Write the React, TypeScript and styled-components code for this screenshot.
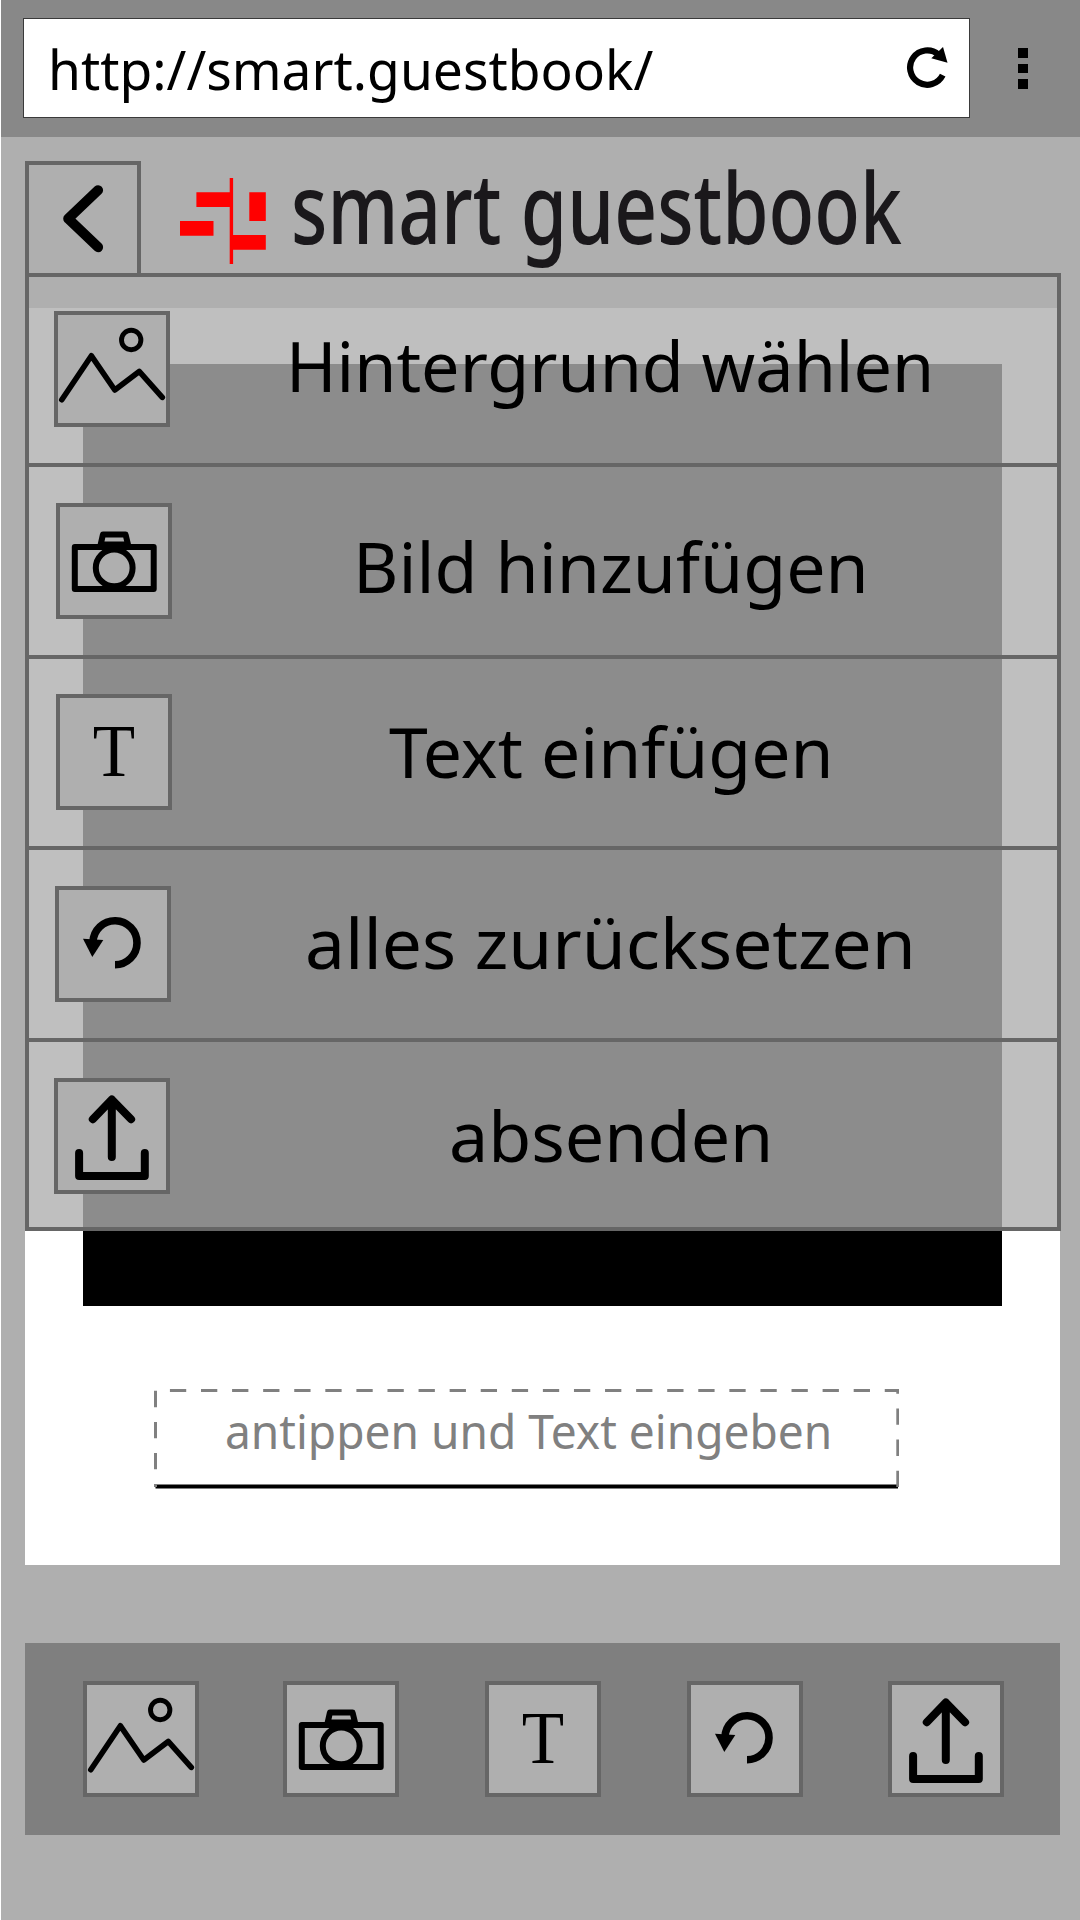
import React, { useLayoutEffect, useRef, useState } from "react";
import styled, { createGlobalStyle } from "styled-components";

const GlobalStyle = createGlobalStyle`
  *, *::before, *::after { box-sizing: border-box; }
  html, body { margin: 0; padding: 0; background: #fff; }
  body { font-family: "Noto Sans", "Open Sans", sans-serif; color: #000; }
`;

const Page = styled.div`
  position: relative;
  width: 1080px;
  height: 1920px;
  overflow: hidden;
  display: flex;
  flex-direction: column;
  background: #afafaf;
  border-left: 1px solid #fff;
`;

const BrowserBar = styled.header`
  flex: none;
  display: flex;
  align-items: flex-start;
  height: 137px;
  margin-left: -1px;
  padding: 18px 0 0 22px;
  background: #888;
  border-left: 1px solid #bebebe;
`;

const AddressField = styled.div`
  display: flex;
  align-items: flex-start;
  justify-content: space-between;
  width: 947px;
  height: 100px;
  padding: 12px 20px 0 24px;
  background: #fff;
  border: 1px solid #3a3a3a;
`;

const ReloadSvg = styled.svg`
  display: block;
  width: 44px;
  height: 44px;
  margin-top: 14px;
`;

const MenuDots = styled.div`
  display: grid;
  gap: 6px;
  margin: 30px 0 0 48px;
`;

const Dot = styled.span`
  width: 10px;
  height: 9.7px;
  background: #000;
`;

const AppHeader = styled.div`
  flex: none;
  display: flex;
  align-items: flex-start;
  height: 171px;
  padding: 24px 0 0 24px;
`;

const BackButton = styled.button`
  width: 116px;
  height: 116px;
  padding: 0;
  background: none;
  border: 4px solid #666;
  border-bottom-width: 0;
`;

const FillSvg = styled.svg`
  display: block;
  overflow: visible;
`;

const LogoSvg = styled.svg`
  display: block;
  width: 86px;
  height: 86px;
  margin: 17px 0 0 39px;
`;

const TitleSlot = styled.div`
  margin: -21px 0 0 25px;
`;

const Card = styled.main`
  flex: none;
  display: flex;
  flex-direction: column;
  width: 1035px;
  height: 1257px;
  margin-left: 24px;
  padding: 56px 58px 0;
  background: #fff;
`;

const Photo = styled.div`
  width: 919px;
  height: 942px;
  background: #000;
`;

const CaptionField = styled.div`
  position: relative;
  width: 745px;
  height: 100px;
  margin: 82px 0 0 71px;
  padding: 11px 0 0 71px;
`;

const DashedFrame = styled.svg`
  position: absolute;
  inset: 0;
  width: 745px;
  height: 101px;
`;

const Toolbar = styled.nav`
  flex: none;
  display: flex;
  gap: 85px;
  width: 1035px;
  height: 192px;
  margin: 78px 0 0 24px;
  padding: 38px 0 0 58px;
  background: #7f7f7f;
`;

const Menu = styled.ul`
  position: absolute;
  top: 273px;
  left: 24px;
  display: grid;
  grid-template-rows: 190px 192px 191px 192px 185px;
  width: 1036px;
  margin: 0;
  padding: 0;
  list-style: none;
  border: 4px solid #666;
  background: rgba(175, 175, 175, 0.8);
  background-clip: padding-box;
`;

const MenuRow = styled.li`
  display: flex;
  align-items: flex-start;
  border-bottom: 4px solid #666;

  &:last-child { border-bottom: 0; }
`;

const IconButton = styled.button<{ $top?: number; $left?: number }>`
  flex: none;
  width: 116px;
  height: 116px;
  margin: ${(p) => p.$top ?? 0}px 0 0 ${(p) => p.$left ?? 0}px;
  padding: 0;
  background: #afafaf;
  border: 4px solid #666;
`;

const IconSvg = styled.svg`
  display: block;
  width: 116px;
  height: 116px;
  margin: -4px;
  overflow: visible;
`;

const LetterIcon = styled.span`
  display: block;
  font: 73px/108px "Liberation Serif", "Times New Roman", serif;
  text-align: center;
  color: #000;
  transform: scaleX(0.95);
`;

const LabelSlot = styled.div<{ $top: number; $gap: number }>`
  margin: ${(p) => p.$top}px 0 0 ${(p) => p.$gap}px;
`;

const FitBox = styled.div<{ $width: number }>`
  width: ${(p) => p.$width}px;
  white-space: nowrap;
`;

const FitInner = styled.span<{ $size: number; $color: string; $weight: number }>`
  display: inline-block;
  vertical-align: top;
  font-size: ${(p) => p.$size}px;
  font-weight: ${(p) => p.$weight};
  line-height: ${(p) => Math.round(p.$size * 1.362)}px;
  color: ${(p) => p.$color};
  transform-origin: 0 0;
`;

type FitTextProps = {
  width: number;
  size: number;
  color?: string;
  weight?: number;
  children: string;
};

/* Condenses or widens a line of text so that it fills the given width. */
function FitText({ width, size, color = "#000", weight = 400, children }: FitTextProps) {
  const ref = useRef<HTMLSpanElement>(null);
  const [scale, setScale] = useState(1);
  useLayoutEffect(() => {
    if (ref.current) setScale(width / ref.current.offsetWidth);
  }, [width, size, weight, children]);
  return (
    <FitBox $width={width}>
      <FitInner ref={ref} $size={size} $color={color} $weight={weight} style={{ transform: `scaleX(${scale})` }}>
        {children}
      </FitInner>
    </FitBox>
  );
}

type IconName = "picture" | "camera" | "text" | "reset" | "send";

function Icon({ name }: { name: IconName }) {
  if (name === "text") return <LetterIcon>T</LetterIcon>;
  return (
    <IconSvg viewBox="0 0 116 116" fill="none" stroke="#000" strokeLinecap="round" strokeLinejoin="round">
      {name === "picture" && (
        <>
          <path d="M7.8 88.7 37.4 44.8 60.8 79 85.2 60.4 108.3 86.3" strokeWidth="5.6" />
          <circle cx="77.2" cy="29" r="9.7" strokeWidth="4.9" />
        </>
      )}
      {name === "camera" && (
        <g strokeWidth="6">
          <path d="M18.8 44.1H97.7V85.9H18.8Z" />
          <path d="M44.7 41.5 46.9 31.6H69.6L72 41.5Z" />
          <circle cx="58.2" cy="64.9" r="18.4" />
        </g>
      )}
      {name === "reset" && (
        <>
          <path d="M60 78.7A22 22 0 1 0 38 56" strokeWidth="7.6" strokeLinecap="butt" />
          <path d="M28 52.7 48.3 54 37.3 71Z" fill="#000" stroke="none" />
        </>
      )}
      {name === "send" && (
        <g strokeWidth="8">
          <path d="M38.8 41.2 57.8 21.5 77.1 41.2M57.8 21.7V78.9" />
          <path d="M25.1 75V97.9H90.8V75" />
        </g>
      )}
    </IconSvg>
  );
}

type Entry = {
  icon: IconName;
  label: string;
  toolLeft: number;
  iconLeft: number;
  iconTop: number;
  labelTop: number;
  gap: number;
  width: number;
};

const entries: Entry[] = [
  { icon: "picture", label: "Hintergrund wählen", toolLeft: 0, iconLeft: 25, iconTop: 34, labelTop: 41, gap: 116, width: 648 },
  { icon: "camera", label: "Bild hinzufügen", toolLeft: -1, iconLeft: 27, iconTop: 36, labelTop: 52, gap: 181, width: 516 },
  { icon: "text", label: "Text einfügen", toolLeft: 1, iconLeft: 27, iconTop: 35, labelTop: 45, gap: 217, width: 445 },
  { icon: "reset", label: "alles zurücksetzen", toolLeft: 1, iconLeft: 26, iconTop: 36, labelTop: 45, gap: 134, width: 611 },
  { icon: "send", label: "absenden", toolLeft: 0, iconLeft: 25, iconTop: 36, labelTop: 46, gap: 279, width: 324 },
];

export default function App() {
  return (
    <>
      <GlobalStyle />
      <Page>
        <BrowserBar>
          <AddressField>
            <FitText width={605} size={55}>http://smart.guestbook/</FitText>
            <ReloadSvg viewBox="904.5 45 44 44">
              <path d="M942.2 75.2A17.2 17.2 0 1 1 938 54.5" fill="none" stroke="#000" strokeWidth="6.2" />
              <path d="M942.5 47 947 62.7 930.8 58.3Z" />
            </ReloadSvg>
          </AddressField>
          <MenuDots>
            <Dot />
            <Dot />
            <Dot />
          </MenuDots>
        </BrowserBar>

        <AppHeader>
          <BackButton aria-label="zurück">
            <FillSvg width="108" height="112" viewBox="29 165 108 112">
              <path
                d="M98.1 190.2 68.2 218.7 98.1 247.2"
                fill="none"
                stroke="#000"
                strokeWidth="10"
                strokeLinecap="round"
                strokeLinejoin="round"
              />
            </FillSvg>
          </BackButton>
          <LogoSvg viewBox="0 0 86 86" fill="#f00">
            <path d="M49.7 0h3.4v86h-3.4zM16.4 14.3h34v14.7h-34zM69.3 14.3h16.5v28.7h-16.5zM0 43h33.5v14.7H0zM52 57h33.8v14.7H52z" />
          </LogoSvg>
          <TitleSlot>
            <FitText width={611} size={98} weight={500} color="#1a181b">smart guestbook</FitText>
          </TitleSlot>
        </AppHeader>

        <Card>
          <Photo />
          <CaptionField>
            <DashedFrame viewBox="0 0 745 101" fill="none">
              <path d="M1.5 98.5H744" stroke="#000" strokeWidth="4" />
              <path d="M743.8 99V2.5H1.5V99" stroke="#808080" strokeWidth="3" strokeDasharray="16.3 14.78" />
            </DashedFrame>
            <FitText width={607} size={47} color="#808080">antippen und Text eingeben</FitText>
          </CaptionField>
        </Card>

        <Toolbar>
          {entries.map((e) => (
            <IconButton key={e.icon} $left={e.toolLeft} aria-label={e.label}>
              <Icon name={e.icon} />
            </IconButton>
          ))}
        </Toolbar>

        <Menu>
          {entries.map((e) => (
            <MenuRow key={e.icon}>
              <IconButton $top={e.iconTop} $left={e.iconLeft} aria-label={e.label}>
                <Icon name={e.icon} />
              </IconButton>
              <LabelSlot $top={e.labelTop} $gap={e.gap}>
                <FitText width={e.width} size={70}>{e.label}</FitText>
              </LabelSlot>
            </MenuRow>
          ))}
        </Menu>
      </Page>
    </>
  );
}
